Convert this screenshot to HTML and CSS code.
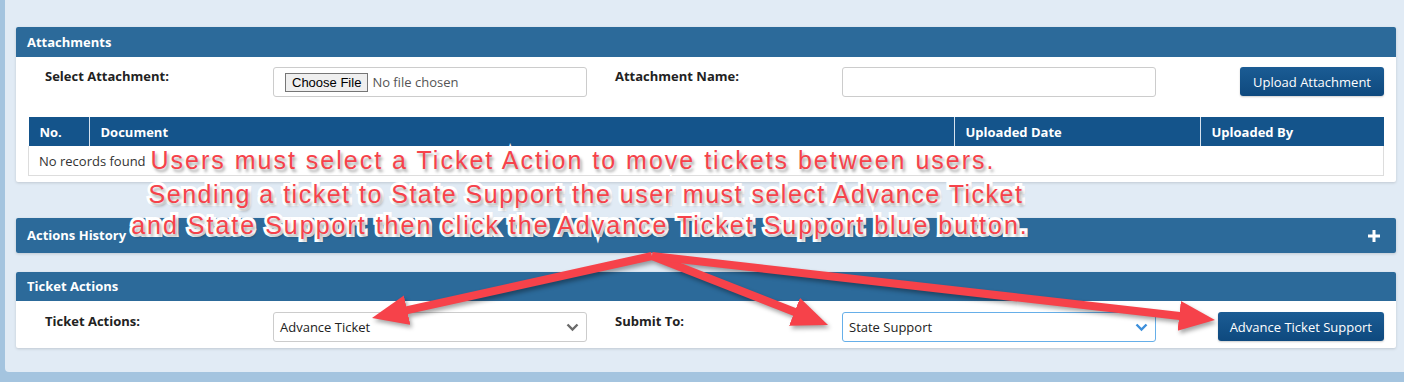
FILE: index.html
```html
<!DOCTYPE html>
<html lang="en">
<head>
  <meta charset="UTF-8">
  <title>Ticket - Attachments and Actions</title>
  <link rel="stylesheet" href="styles.css">
</head>
<body>
  <div class="page">
    <section class="panel attachments">
      <div class="panel-head">Attachments</div>
      <div class="panel-body">
        <div class="form-row">
          <label class="field-label">Select Attachment:</label>
          <div class="input file-input">
            <span class="file-btn">Choose File</span>
            <span class="file-name">No file chosen</span>
          </div>
          <label class="field-label second">Attachment Name:</label>
          <div class="input"></div>
          <button class="btn">Upload Attachment</button>
        </div>
        <table class="grid">
          <thead>
            <tr>
              <th class="col-no">No.</th>
              <th class="col-doc">Document</th>
              <th class="col-date">Uploaded Date</th>
              <th class="col-by">Uploaded By</th>
            </tr>
          </thead>
          <tbody>
            <tr>
              <td colspan="4">No records found</td>
            </tr>
          </tbody>
        </table>
      </div>
    </section>

    <section class="panel history">
      <div class="panel-head">
        <span>Actions History</span>
        <svg class="plus" width="12" height="12" viewBox="0 0 12 12">
          <path d="M4.5 0h3v4.5H12v3H7.5V12h-3V7.5H0v-3h4.5z" fill="#fff"/>
        </svg>
      </div>
    </section>

    <section class="panel actions">
      <div class="panel-head">Ticket Actions</div>
      <div class="panel-body">
        <div class="form-row">
          <label class="field-label">Ticket Actions:</label>
          <div class="input select">
            <span>Advance Ticket</span>
            <svg class="chevron" width="13" height="9" viewBox="0 0 13 9">
              <path d="M1.5 1.5l5 5 5-5" fill="none" stroke="#6b6b6b" stroke-width="2.4"/>
            </svg>
          </div>
          <label class="field-label second">Submit To:</label>
          <div class="input select focused">
            <span>State Support</span>
            <svg class="chevron" width="13" height="9" viewBox="0 0 13 9">
              <path d="M1.5 1.5l5 5 5-5" fill="none" stroke="#3d8fdb" stroke-width="2.4"/>
            </svg>
          </div>
          <button class="btn">Advance Ticket Support</button>
        </div>
      </div>
    </section>
  </div>

  <!-- annotation drawn over the screenshot -->
  <div class="callout">
    <p class="line-1">Users must select a Ticket Action to move tickets between users.</p>
    <p class="line-2">Sending a ticket to State Support the user must select Advance Ticket</p>
    <p class="line-3">and State Support then click the Advance Ticket Support blue button.</p>
  </div>

  <svg class="arrows" width="1404" height="382" viewBox="0 0 1404 382">
    <defs>
      <marker id="head" markerUnits="userSpaceOnUse" markerWidth="40" markerHeight="34"
              refX="16" refY="15" orient="auto">
        <path d="M0 0L36 15L0 30z" fill="#f6424a"/>
      </marker>
    </defs>
    <g stroke="#f6424a" stroke-width="8" stroke-linejoin="round" fill="none">
      <path d="M652 256L391.5 313.7" marker-end="url(#head)"/>
      <path d="M652 256L809.4 317.7" marker-end="url(#head)"/>
      <path d="M652 256L1195.1 317.7" marker-end="url(#head)"/>
    </g>
  </svg>
</body>
</html>
```
FILE: styles.css
```css
body {
  margin: 0;
  background-color: #a4c4df;
  font-family: 'Open Sans', 'Liberation Sans', sans-serif;
  font-size: 13px;
  color: #333;
}

.page {
  margin-left: 5px;
  height: 372px;
  box-sizing: border-box;
  padding: 27px 8px 0 11px;
  background-color: #e1ebf5;
  border-bottom-left-radius: 4px;
}

.panel {
  background-color: #fff;
  border-radius: 2px;
  box-shadow: 0 1px 3px rgba(0,0,0,0.15);
}

.attachments {
  margin-bottom: 36px;
}

.history {
  margin-bottom: 19px;
}

.panel-head {
  height: 30px;
  line-height: 30px;
  padding: 0 11px;
  background-color: #2c6a9a;
  color: #fff;
  font-weight: 700;
  border-radius: 2px 2px 0 0;
}

.history .panel-head {
  height: 35px;
  line-height: 35px;
  display: flex;
  align-items: center;
  justify-content: space-between;
  padding-right: 16px;
  border-radius: 2px;
}

.actions .panel-head {
  height: 29px;
  line-height: 29px;
}

.panel-body {
  padding-bottom: 6px;
}

.form-row {
  display: flex;
  align-items: flex-start;
  padding: 10px 12px 0 29px;
}

.actions .form-row {
  padding-top: 11px;
}

.field-label {
  width: 228px;
  line-height: 18px;
  font-weight: 700;
  color: #222;
}

.field-label.second {
  width: 227px;
  margin-left: 28px;
}

.input {
  width: 314px;
  height: 30px;
  box-sizing: border-box;
  border: 1px solid #ccc;
  border-radius: 3px;
  display: flex;
  align-items: center;
  padding: 0 6px;
}

.file-input {
  padding-left: 11px;
}

.file-btn {
  font-family: 'Liberation Sans', Arial, sans-serif;
  font-size: 13px;
  color: #000;
  background-color: #efefef;
  border: 1px solid #767676;
  padding: 1px 6px;
  line-height: 15px;
}

.file-name {
  margin-left: 4px;
  color: #555;
}

.select {
  justify-content: space-between;
  padding: 0 7px 0 6px;
  color: #222;
}

.select.focused {
  border-color: #66afe9;
}

.btn {
  margin-left: auto;
  height: 29px;
  padding: 0 13px;
  border: none;
  border-radius: 3px;
  background: linear-gradient(#1b5c94, #0e497e);
  color: #fff;
  font-family: inherit;
  font-size: 13px;
  box-shadow: 0 1px 2px rgba(0,0,0,0.2);
}

.actions .btn {
  padding: 0 12px;
}

.grid {
  width: 1356px;
  margin: 20px 12px 0;
  border-collapse: collapse;
}

.grid th {
  height: 29px;
  padding: 0 11px;
  text-align: left;
  background-color: #14548b;
  color: #fff;
  font-weight: 700;
  border-left: 1px solid #d6e2ee;
}

.grid th:first-child {
  border-left: none;
}

.col-no { width: 38px; }
.col-doc { width: 842px; }
.col-date { width: 223px; }

.grid td {
  height: 29px;
  padding: 0 10px;
  color: #333;
  border: 1px solid #ddd;
  border-top: none;
}

.callout {
  position: absolute;
  top: 144px;
  left: 80px;
  width: 1000px;
  text-align: center;
  white-space: nowrap;
  font-family: 'Liberation Sans', Arial, sans-serif;
  font-size: 25px;
  letter-spacing: 2px;
  line-height: 32px;
  color: #f6424a;
  -webkit-text-stroke: 6px #fff;
  paint-order: stroke fill;
  text-shadow: 2px 3px 3px rgba(0,0,0,0.35);
}

.callout p {
  margin: 0;
}

.callout .line-1 {
  padding-right: 14px;
}

.callout .line-2 {
  padding-left: 12px;
  letter-spacing: 1.5px;
  margin-top: 2px;
}

.callout .line-3 {
  margin-top: -1px;
}

.arrows {
  position: absolute;
  top: 0;
  left: 0;
  filter: drop-shadow(2px 3px 2px rgba(0,0,0,0.35));
}
```
